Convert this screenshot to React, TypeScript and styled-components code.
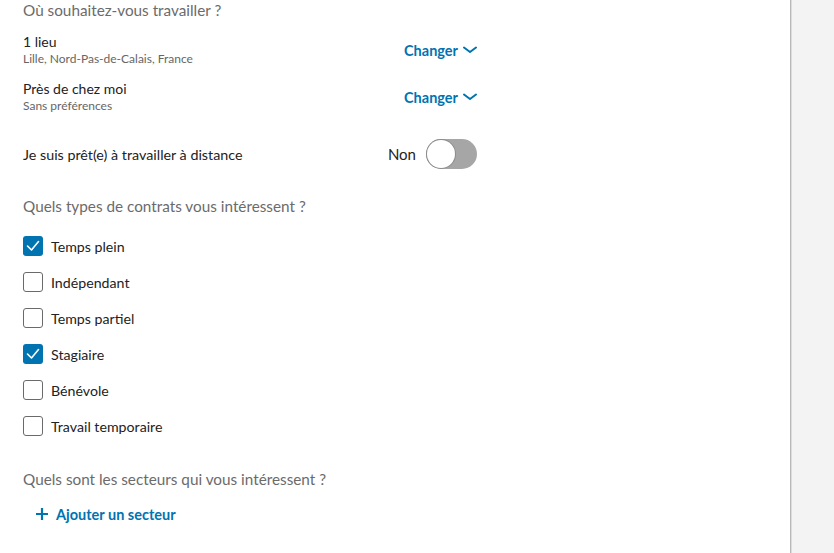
import React from "react";
import styled, { createGlobalStyle } from "styled-components";

const GlobalStyle = createGlobalStyle`
  html, body { margin: 0; padding: 0; background: #ffffff; }
  body { font-family: Lato, "Open Sans", sans-serif; color: #222; }
  * { box-sizing: border-box; }
`;

const Page = styled.div`
  display: flex;
  width: 834px;
  height: 553px;
  overflow: hidden;
`;

const Main = styled.main`
  width: 790px;
  background: #fff;
  padding: 0 0 0 23px;
`;

const Side = styled.aside`
  flex: 1;
  background: #f3f3f3;
  border-left: 1px solid #b8b8b8;
  box-shadow: inset 1px 0 0 #dcdcdc;
`;

const Content = styled.div`
  width: 454px;
  display: flex;
  flex-direction: column;
`;

const Heading = styled.h3<{ $mt: number }>`
  margin: ${(p) => p.$mt}px 0 0 0;
  font-size: 15.3px;
  line-height: 20px;
  font-weight: 400;
  color: #6b6b6b;
`;

const Row = styled.div<{ $mt: number }>`
  display: flex;
  align-items: center;
  justify-content: space-between;
  margin-top: ${(p) => p.$mt}px;
`;

const Texts = styled.div`
  display: flex;
  flex-direction: column;
`;

const Title = styled.div`
  font-size: 14px;
  line-height: 18px;
  color: #222;
`;

const Sub = styled.div`
  font-size: 12px;
  line-height: 16px;
  color: #666;
`;

const LinkButton = styled.button`
  display: flex;
  align-items: center;
  gap: 5px;
  border: 0;
  background: none;
  padding: 0;
  font-family: inherit;
  font-size: 14.5px;
  font-weight: 700;
  color: #0073b1;
  cursor: pointer;
`;

const Label = styled.span`
  font-size: 14.3px;
  color: #222;
`;

const ToggleWrap = styled.div`
  display: flex;
  align-items: center;
  gap: 10px;
  font-size: 15px;
  color: #222;
`;

const Track = styled.div<{ $on: boolean }>`
  position: relative;
  width: 51px;
  height: 30px;
  border-radius: 15px;
  background: ${(p) => (p.$on ? "#0073b1" : "#a6a6a6")};
`;

const Knob = styled.div<{ $on: boolean }>`
  position: absolute;
  top: 1px;
  left: ${(p) => (p.$on ? "22px" : "1px")};
  width: 28px;
  height: 28px;
  border-radius: 50%;
  background: #fff;
  box-shadow: 0 0 0 1px #8c8c8c;
`;

const CheckList = styled.div`
  display: flex;
  flex-direction: column;
  gap: 16px;
  margin-top: 20px;
`;

const CheckRow = styled.label`
  display: flex;
  align-items: center;
  gap: 8px;
  height: 20px;
  font-size: 14.2px;
  color: #222;
`;

const Box = styled.span<{ $checked: boolean }>`
  display: flex;
  align-items: center;
  justify-content: center;
  width: 20px;
  height: 20px;
  border-radius: 3px;
  background: ${(p) => (p.$checked ? "#0073b1" : "#fff")};
  border: ${(p) => (p.$checked ? "none" : "1px solid #6a6a6a")};
`;

const AddButton = styled(LinkButton)`
  margin: 15px 0 0 13px;
  gap: 8px;
  height: 20px;
  font-size: 14.5px;
`;

const Chevron = () => (
  <svg width="14" height="8" viewBox="0 0 14 8" fill="none">
    <path d="M1 1.5 L7 6 L13 1.5" stroke="#0073b1" strokeWidth="2" strokeLinecap="round" strokeLinejoin="round" />
  </svg>
);

const Check = () => (
  <svg width="14" height="12" viewBox="0 0 14 12" fill="none">
    <path d="M1.5 6 L5.5 10 L12.5 1.5" stroke="#fff" strokeWidth="1.6" strokeLinecap="round" strokeLinejoin="round" />
  </svg>
);

const Plus = () => (
  <svg width="12" height="12" viewBox="0 0 12 12" fill="none">
    <path d="M6 0 V12 M0 6 H12" stroke="#0073b1" strokeWidth="2.2" />
  </svg>
);

const contracts: [string, boolean][] = [
  ["Temps plein", true],
  ["Indépendant", false],
  ["Temps partiel", false],
  ["Stagiaire", true],
  ["Bénévole", false],
  ["Travail temporaire", false],
];

export default function App() {
  return (
    <>
      <GlobalStyle />
      <Page>
        <Main>
          <Content>
            <Heading $mt={0}>Où souhaitez-vous travailler ?</Heading>
            <Row $mt={13}>
              <Texts>
                <Title>1 lieu</Title>
                <Sub>Lille, Nord-Pas-de-Calais, France</Sub>
              </Texts>
              <LinkButton>
                Changer <Chevron />
              </LinkButton>
            </Row>
            <Row $mt={13}>
              <Texts>
                <Title>Près de chez moi</Title>
                <Sub>Sans préférences</Sub>
              </Texts>
              <LinkButton>
                Changer <Chevron />
              </LinkButton>
            </Row>
            <Row $mt={25}>
              <Label>Je suis prêt(e) à travailler à distance</Label>
              <ToggleWrap>
                Non
                <Track $on={false}>
                  <Knob $on={false} />
                </Track>
              </ToggleWrap>
            </Row>
            <Heading $mt={27}>Quels types de contrats vous intéressent ?</Heading>
            <CheckList>
              {contracts.map(([name, checked]) => (
                <CheckRow key={name}>
                  <Box $checked={checked}>{checked && <Check />}</Box>
                  {name}
                </CheckRow>
              ))}
            </CheckList>
            <Heading $mt={33}>Quels sont les secteurs qui vous intéressent ?</Heading>
            <AddButton>
              <Plus />
              Ajouter un secteur
            </AddButton>
          </Content>
        </Main>
        <Side />
      </Page>
    </>
  );
}
